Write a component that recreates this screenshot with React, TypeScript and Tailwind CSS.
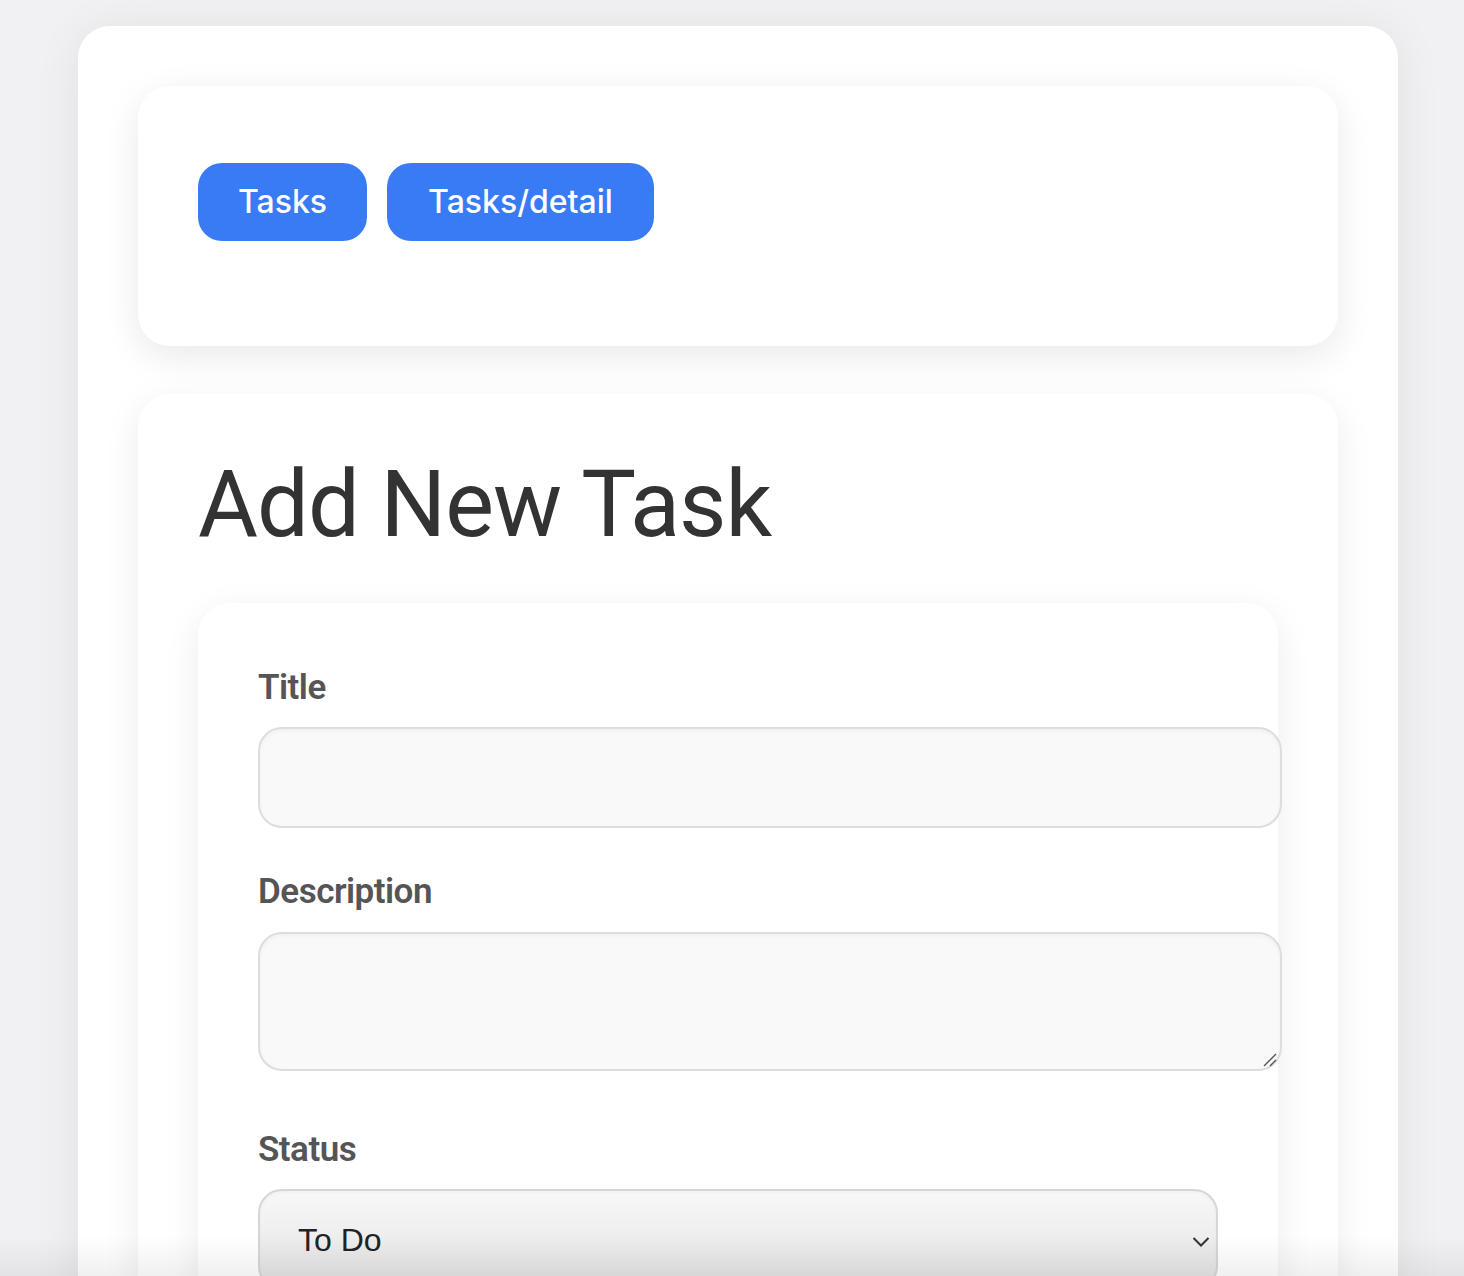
import React from "react";

export default function App() {
  return (
    <div className="relative h-[1276px] overflow-hidden bg-[#f1f1f3] pl-[78px] pt-[26px]" style={{ fontFamily: "Roboto, 'Liberation Sans', sans-serif" }}>
      <div className="min-h-[1300px] w-[1320px] rounded-t-[32px] bg-white px-[60px] pt-[60px] shadow-[0_4px_48px_rgba(0,0,0,0.07)]">
        <div className="h-[260px] rounded-[32px] bg-white px-[60px] pt-[77px] shadow-[0_10px_36px_rgba(0,0,0,0.09)]">
          <div className="flex gap-[20px]" style={{ fontFamily: "Inter, Roboto, sans-serif" }}>
            <button className="flex h-[78px] w-[169px] items-center justify-center rounded-[24px] bg-[#387bf5] text-[32px] font-medium leading-none text-white">
              Tasks
            </button>
            <button className="flex h-[78px] w-[267px] items-center justify-center rounded-[24px] bg-[#387bf5] text-[32px] font-medium leading-none text-white">
              Tasks/detail
            </button>
          </div>
        </div>

        <div className="mt-[48px] min-h-[900px] rounded-[32px] bg-white px-[60px] pt-[55px] shadow-[0_10px_36px_rgba(0,0,0,0.08)]">
          <h1 className="text-[92px] font-normal leading-[112px] tracking-[-1px] text-[#333]">Add New Task</h1>

          <div className="mt-[42px] min-h-[700px] rounded-[32px] bg-white px-[60px] pt-[64px] shadow-[0_10px_36px_rgba(0,0,0,0.08)]">
            <label className="block text-[35px] font-semibold leading-[42px] tracking-[-0.5px] text-[#555]">Title</label>
            <div className="mt-[18px] h-[101px] w-[1024px] rounded-[24px] border-2 border-[#dddddd] bg-[#f9f9f9] shadow-[inset_0_2px_4px_rgba(0,0,0,0.04)]" />

            <label className="mt-[43px] block text-[35px] font-semibold leading-[42px] tracking-[-0.5px] text-[#555]">Description</label>
            <div className="relative mt-[19px] h-[139px] w-[1024px] rounded-[24px] border-2 border-[#dddddd] bg-[#f9f9f9] shadow-[inset_0_2px_4px_rgba(0,0,0,0.04)]">
              <svg className="absolute bottom-[1px] right-[2px]" width="16" height="16" viewBox="0 0 16 16">
                <line x1="2" y1="14" x2="14" y2="2" stroke="#555" strokeWidth="1.3" />
                <line x1="8" y1="14" x2="14" y2="8" stroke="#555" strokeWidth="1.3" />
              </svg>
            </div>

            <label className="mt-[58px] block text-[35px] font-semibold leading-[42px] tracking-[-0.5px] text-[#555]">Status</label>
            <div className="relative mt-[18px] flex h-[101px] w-[960px] items-center rounded-[24px] border-2 border-[#d6d6d6] bg-gradient-to-b from-[#f8f8f8] to-[#e2e2e2] pl-[38px] shadow-[inset_0_2px_3px_rgba(0,0,0,0.03)]">
              <span className="text-[32px] leading-none text-[#222]" style={{ fontFamily: "'Liberation Sans', Arial, sans-serif" }}>To Do</span>
              <svg className="absolute right-[6px] top-[45px]" width="18" height="12" viewBox="0 0 18 12">
                <polyline points="1.5,2 9,9.5 16.5,2" fill="none" stroke="#333" strokeWidth="2" />
              </svg>
            </div>
          </div>
        </div>
      </div>
      <div className="pointer-events-none absolute bottom-0 left-0 h-[40px] w-full bg-gradient-to-b from-[rgba(0,0,0,0)] to-[rgba(0,0,0,0.06)]" />
    </div>
  );
}
